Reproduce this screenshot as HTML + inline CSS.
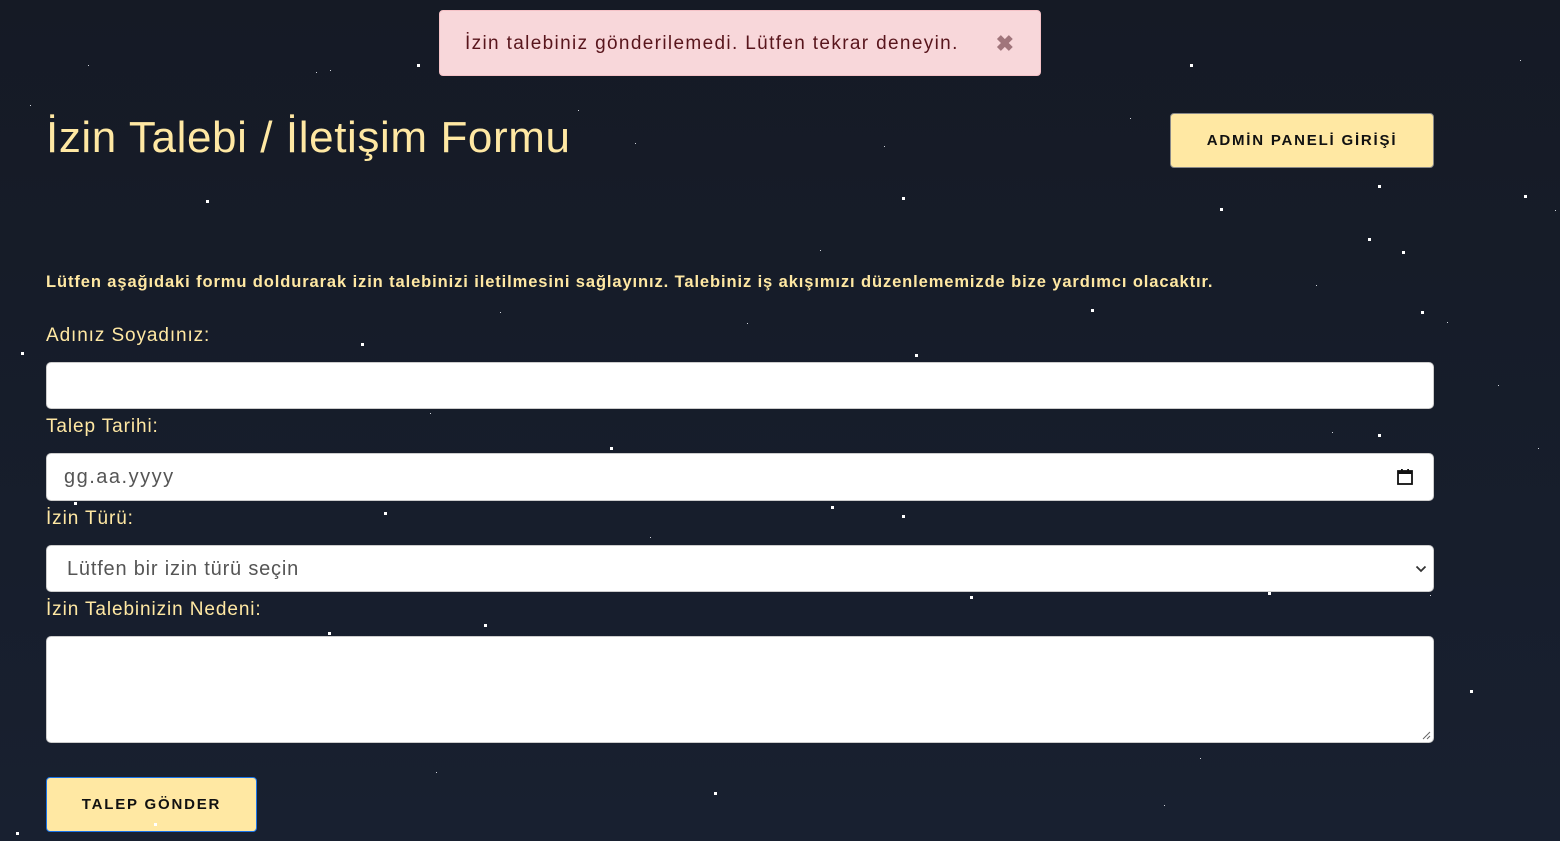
<!DOCTYPE html>
<html><head><meta charset="utf-8"><style>
*{box-sizing:border-box;margin:0;padding:0}
html,body{width:1560px;height:841px;overflow:hidden}
body{background:linear-gradient(180deg,#151a25 0%,#182030 100%);font-family:"Liberation Sans",sans-serif;position:relative;color:#ffe8a3}
.s{position:absolute;background:#fff;width:3px;height:3px}
.t{position:absolute;background:#cfd3da;width:1px;height:1px}
.alert{position:absolute;left:439px;top:10px;width:602px;height:66px;background:#f8d7da;border:1px solid #f5c2c7;border-radius:4px;color:#58151c;font-size:19px;line-height:66px;padding-left:25px;letter-spacing:1.35px}
.alert .x{position:absolute;right:26px;top:0;color:#a0757b;font-size:22px;font-weight:bold;letter-spacing:0}
h1{position:absolute;left:46px;top:113px;font-size:44px;font-weight:normal;color:#ffe8a3;letter-spacing:0.6px}
.btn{position:absolute;background:#ffe8a3;color:#111;font-weight:bold;letter-spacing:1.8px;font-size:15px;text-align:center;border-radius:4px}
.p{position:absolute;left:46px;top:273px;font-size:16.5px;font-weight:bold;color:#ffe8a3;letter-spacing:0.9px;white-space:nowrap}
.l{position:absolute;left:46px;font-size:19px;color:#ffe8a3;letter-spacing:0.9px}
.in{position:absolute;left:46px;width:1388px;background:#fff;border:1px solid #ccc;border-radius:5px;color:#555;font-size:20px}
</style></head><body>
<div class="alert">İzin talebiniz gönderilemedi. Lütfen tekrar deneyin.<span class="x">✖</span></div>
<h1>İzin Talebi / İletişim Formu</h1>
<div class="btn" style="left:1170px;top:113px;width:264px;height:55px;line-height:53px;border:1px solid #888">ADMİN PANELİ GİRİŞİ</div>
<div class="p">Lütfen aşağıdaki formu doldurarak izin talebinizi iletilmesini sağlayınız. Talebiniz iş akışımızı düzenlememizde bize yardımcı olacaktır.</div>
<div class="l" style="top:325px">Adınız Soyadınız:</div>
<div class="in" style="top:362px;height:47px"></div>
<div class="l" style="top:416px">Talep Tarihi:</div>
<div class="in" style="top:453px;height:48px;line-height:46px;padding-left:17px;letter-spacing:1.5px">gg.aa.yyyy
<svg style="position:absolute;right:19px;top:14px" width="18" height="18" viewBox="0 0 18 18"><rect x="2" y="3" width="14" height="13" fill="none" stroke="#111" stroke-width="1.8"/><rect x="2" y="3" width="14" height="3" fill="#111"/><rect x="5" y="1" width="1.8" height="3" fill="#111"/><rect x="11.2" y="1" width="1.8" height="3" fill="#111"/></svg></div>
<div class="l" style="top:508px">İzin Türü:</div>
<div class="in" style="top:545px;height:47px;line-height:46px;padding-left:20px;letter-spacing:0.8px">Lütfen bir izin türü seçin
<svg style="position:absolute;right:6px;top:18px" width="12" height="10" viewBox="0 0 12 10"><path d="M1.5 2.5 L6 7 L10.5 2.5" fill="none" stroke="#333" stroke-width="1.8"/></svg></div>
<div class="l" style="top:599px">İzin Talebinizin Nedeni:</div>
<div class="in" style="top:636px;height:107px">
<svg style="position:absolute;right:2px;bottom:2px" width="10" height="10" viewBox="0 0 10 10"><path d="M9 2 L2 9 M9 6 L6 9" stroke="#666" stroke-width="1"/></svg></div>
<div class="btn" style="left:46px;top:777px;width:211px;height:55px;line-height:53px;border:1px solid #1a73e8">TALEP GÖNDER</div>

<div class="s" style="left:206px;top:200px"></div><div class="s" style="left:902px;top:197px"></div>
<div class="s" style="left:1378px;top:185px"></div><div class="s" style="left:1368px;top:238px"></div>
<div class="s" style="left:1402px;top:251px"></div><div class="s" style="left:1524px;top:195px"></div>
<div class="s" style="left:1091px;top:309px"></div><div class="s" style="left:1421px;top:311px"></div>
<div class="s" style="left:361px;top:343px"></div><div class="s" style="left:915px;top:354px"></div>
<div class="s" style="left:21px;top:352px"></div><div class="s" style="left:610px;top:447px"></div>
<div class="s" style="left:384px;top:512px"></div><div class="s" style="left:831px;top:506px"></div>
<div class="s" style="left:902px;top:515px"></div><div class="s" style="left:1378px;top:434px"></div>
<div class="s" style="left:484px;top:624px"></div><div class="s" style="left:328px;top:632px"></div>
<div class="s" style="left:1470px;top:690px"></div><div class="s" style="left:714px;top:792px"></div>
<div class="s" style="left:16px;top:832px"></div><div class="s" style="left:154px;top:823px"></div>
<div class="s" style="left:417px;top:64px"></div><div class="s" style="left:1190px;top:64px"></div>
<div class="s" style="left:1268px;top:592px"></div><div class="s" style="left:970px;top:596px"></div>
<div class="s" style="left:1220px;top:208px"></div><div class="s" style="left:74px;top:502px"></div>
<div class="t" style="left:316px;top:72px"></div><div class="t" style="left:330px;top:70px"></div>
<div class="t" style="left:578px;top:110px"></div><div class="t" style="left:635px;top:143px"></div>
<div class="t" style="left:884px;top:146px"></div><div class="t" style="left:1130px;top:118px"></div>
<div class="t" style="left:1316px;top:285px"></div><div class="t" style="left:1447px;top:322px"></div>
<div class="t" style="left:747px;top:323px"></div><div class="t" style="left:430px;top:413px"></div>
<div class="t" style="left:1332px;top:432px"></div><div class="t" style="left:1538px;top:448px"></div>
<div class="t" style="left:650px;top:537px"></div><div class="t" style="left:1430px;top:595px"></div>
<div class="t" style="left:1200px;top:758px"></div><div class="t" style="left:1164px;top:805px"></div>
<div class="t" style="left:436px;top:772px"></div><div class="t" style="left:30px;top:105px"></div>
<div class="t" style="left:88px;top:65px"></div><div class="t" style="left:1520px;top:60px"></div>
<div class="t" style="left:1555px;top:210px"></div><div class="t" style="left:1498px;top:385px"></div>
<div class="t" style="left:500px;top:312px"></div><div class="t" style="left:820px;top:250px"></div>
</body></html>
